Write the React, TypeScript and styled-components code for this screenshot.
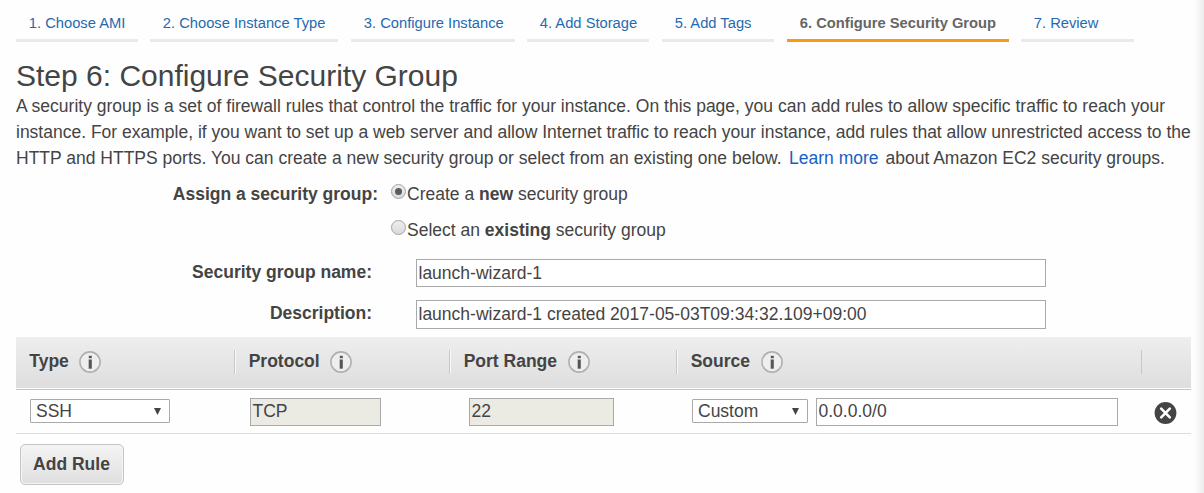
import React from 'react';
import styled, { createGlobalStyle } from 'styled-components';

const GlobalStyle = createGlobalStyle`
  * { box-sizing: border-box; }
  html, body { margin: 0; padding: 0; }
  body {
    background: #fefefe;
    color: #444;
    font-family: "Liberation Sans", Arial, sans-serif;
    font-size: 17.5px;
    overflow: hidden;
  }
`;

const Page = styled.main`
  display: flex;
  justify-content: space-between;
  width: 1204px;
  height: 493px;
  overflow: hidden;
`;

const Content = styled.div`
  display: flex;
  flex-direction: column;
  width: 1175px;
  margin-left: 16px;
`;

const EdgeShadow = styled.div`
  width: 10px;
  background: linear-gradient(to right, #fefefe, #f6f6f6 50%, #ebebeb);
`;

const Tabs = styled.nav`
  display: flex;
  height: 42px;
`;

const Tab = styled.a<{ $width: number; $gap: number; $active?: boolean }>`
  width: ${p => p.$width}px;
  margin-right: ${p => p.$gap}px;
  padding: 14px 0 0 12.8px;
  border-bottom: 3px solid ${p => (p.$active ? '#fa9a14' : '#eaeaea')};
  color: ${p => (p.$active ? '#666' : '#1f6ab2')};
  font-size: 14.72px;
  font-weight: ${p => (p.$active ? 700 : 400)};
  line-height: 18px;
  white-space: nowrap;
`;

const Title = styled.h1`
  margin: 17px 0 0;
  font-size: 30px;
  font-weight: 400;
  line-height: 34px;
  white-space: nowrap;
`;

const Intro = styled.p`
  margin: 0;
  line-height: 26px;
  white-space: nowrap;
`;

const Line = styled.span<{ $spacing?: number }>`
  display: block;
  letter-spacing: ${p => p.$spacing ?? 0}px;
`;

const Link = styled.a`
  margin: 0 2px 0 2.6px;
  color: #1a5fc4;
`;

const ChoiceRow = styled.div`
  display: flex;
  height: 36px;
  line-height: 20px;
  white-space: nowrap;
`;

const ChoiceLabel = styled.strong`
  width: 362px;
  text-align: right;
`;

const Choice = styled.label`
  display: flex;
  margin-left: 13px;
`;

const Radio = styled.span<{ $checked?: boolean }>`
  display: flex;
  align-items: center;
  justify-content: center;
  width: 15px;
  height: 15px;
  margin-right: 1px;
  border: 1px solid #a2a2a2;
  border-radius: 50%;
  background: linear-gradient(#eee, #dadada);
  &::after {
    content: '';
    width: 7px;
    height: 7px;
    border-radius: 50%;
    background: ${p => (p.$checked ? '#5c5c5c' : 'transparent')};
  }
`;

const Choices = styled.div`
  padding-top: 13px;
  height: 88px;
`;

const Field = styled.div<{ $gap: number; $height: number }>`
  display: flex;
  height: ${p => p.$height}px;
  margin-bottom: ${p => p.$gap}px;
`;

const FieldLabel = styled.strong`
  width: 356px;
  margin-right: 44px;
  line-height: 26px;
  text-align: right;
`;

const TextBox = styled.div<{ $width: number; $disabled?: boolean; $line?: number }>`
  width: ${p => p.$width}px;
  height: 100%;
  padding-left: 1.5px;
  border: 1px solid #a9a9a9;
  background: ${p => (p.$disabled ? '#ebebe4' : '#fff')};
  line-height: ${p => p.$line ?? 26}px;
  white-space: nowrap;
`;

const HeaderRow = styled.div`
  display: flex;
  height: 51px;
  padding-top: 13px;
  background: linear-gradient(#eee, #dedede);
`;

const HeaderCell = styled.div<{ $width: number; $divided?: boolean; $last?: boolean }>`
  display: flex;
  width: ${p => p.$width}px;
  height: 24px;
  padding-left: ${p => (p.$divided ? 13.7 : 13.3)}px;
  border-left: ${p => (p.$divided ? '1px solid #c8c8c8' : '0')};
  box-shadow: ${p => (p.$divided && !p.$last ? 'inset 1px 0 #f8f8f8' : 'none')};
  font-weight: 700;
  line-height: 22px;
  white-space: nowrap;
`;

const HeaderLabel = styled.span<{ $width: number }>`
  width: ${p => p.$width}px;
`;

const RuleRow = styled.div`
  display: flex;
  height: 45px;
  margin-top: 1px;
  padding: 8px 0 7px 14px;
  border-top: 1px solid #c4c4c4;
  border-bottom: 1px solid #ddd;
`;

const Cell = styled.div<{ $width: number }>`
  display: flex;
  width: ${p => p.$width}px;
  height: 28px;
`;

const Select = styled.div<{ $width: number }>`
  display: flex;
  justify-content: space-between;
  width: ${p => p.$width}px;
  height: 24px;
  margin: 1px 8px 0 0;
  padding: 0 8px 0 5px;
  border: 1px solid #a9a9a9;
  border-radius: 1px;
  background: #fff;
  line-height: 22px;
  svg { margin-top: 8px; }
`;

const RemoveButton = styled.span`
  display: flex;
  margin-top: 4px;
`;

const AddButton = styled.button`
  width: 104px;
  height: 41px;
  margin: 10px 0 0 4px;
  padding: 0 1px 0 0;
  border: 1px solid #c4c4c4;
  border-radius: 5px;
  background: linear-gradient(#f4f4f4, #dfdfdf);
  box-shadow: inset 0 0 0 1px #f4f4f4;
  color: #444;
  font: 700 17.5px "Liberation Sans", Arial, sans-serif;
`;

const Icon = styled.svg`
  flex: none;
  margin-top: 1px;
`;

const InfoIcon = () => (
  <Icon width="22" height="22" viewBox="0 0 22 22">
    <circle cx="11" cy="11" r="10.1" fill="#eee" stroke="#b0b0b0" strokeWidth="1.6" />
    <path d="M9.8 4.8h3v2.4h-3z" fill="#555" />
    <path d="M9.8 8.5h3v9.2h-3z" fill="#555" />
    <path d="M9 8.5h.8v9.2H9z" fill="#bbb" />
  </Icon>
);

const Arrow = () => (
  <svg width="7" height="7" viewBox="0 0 7 7">
    <path d="M0 0h7L3.5 7z" fill="#444" />
  </svg>
);

const tabs = [
  { label: '1. Choose AMI', width: 122, gap: 12 },
  { label: '2. Choose Instance Type', width: 188, gap: 13 },
  { label: '3. Configure Instance', width: 164, gap: 12 },
  { label: '4. Add Storage', width: 122, gap: 13 },
  { label: '5. Add Tags', width: 112, gap: 13 },
  { label: '6. Configure Security Group', width: 222, gap: 12, active: true },
  { label: '7. Review', width: 113, gap: 0 },
];

const columns = [
  { label: 'Type', width: 218, labelWidth: 49.7 },
  { label: 'Protocol', width: 215, labelWidth: 81.3 },
  { label: 'Port Range', width: 227, labelWidth: 104.3 },
  { label: 'Source', width: 465, labelWidth: 70.3 },
];

export default function App() {
  return (
    <Page>
      <GlobalStyle />
      <Content>
        <Tabs>
          {tabs.map(t => (
            <Tab key={t.label} $width={t.width} $gap={t.gap} $active={t.active}>{t.label}</Tab>
          ))}
        </Tabs>
        <Title>Step 6: Configure Security Group</Title>
        <Intro>
          <Line $spacing={0.006}>A security group is a set of firewall rules that control the traffic for your instance. On this page, you can add rules to allow specific traffic to reach your</Line>
          <Line>instance. For example, if you want to set up a web server and allow Internet traffic to reach your instance, add rules that allow unrestricted access to the</Line>
          <Line $spacing={0.004}>HTTP and HTTPS ports. You can create a new security group or select from an existing one below. <Link>Learn more</Link> about Amazon EC2 security groups.</Line>
        </Intro>
        <Choices>
          <ChoiceRow>
            <ChoiceLabel>Assign a security group:</ChoiceLabel>
            <Choice><Radio $checked /><span>Create a <b>new</b> security group</span></Choice>
          </ChoiceRow>
          <ChoiceRow>
            <ChoiceLabel />
            <Choice><Radio /><span>Select an <b>existing</b> security group</span></Choice>
          </ChoiceRow>
        </Choices>
        <Field $height={28} $gap={13}>
          <FieldLabel>Security group name:</FieldLabel>
          <TextBox $width={630}>launch-wizard-1</TextBox>
        </Field>
        <Field $height={29} $gap={8}>
          <FieldLabel>Description:</FieldLabel>
          <TextBox $width={630}>launch-wizard-1 created 2017-05-03T09:34:32.109+09:00</TextBox>
        </Field>
        <HeaderRow>
          {columns.map((c, i) => (
            <HeaderCell key={c.label} $width={c.width} $divided={i > 0}>
              <HeaderLabel $width={c.labelWidth}>{c.label}</HeaderLabel>
              <InfoIcon />
            </HeaderCell>
          ))}
          <HeaderCell $width={50} $divided $last />
        </HeaderRow>
        <RuleRow>
          <Cell $width={220}><Select $width={140}>SSH<Arrow /></Select></Cell>
          <Cell $width={219}><TextBox $width={131} $disabled $line={24}>TCP</TextBox></Cell>
          <Cell $width={223}><TextBox $width={145} $disabled $line={24}>22</TextBox></Cell>
          <Cell $width={462}>
            <Select $width={116}>Custom<Arrow /></Select>
            <TextBox $width={302} $line={24}>0.0.0.0/0</TextBox>
          </Cell>
          <RemoveButton>
            <svg width="23" height="23" viewBox="0 0 23 23">
              <circle cx="11.5" cy="11" r="10.9" fill="#444" />
              <path d="M7.2 6.7l8.6 8.6M15.8 6.7l-8.6 8.6" stroke="#fff" strokeWidth="2.6" strokeLinecap="round" />
            </svg>
          </RemoveButton>
        </RuleRow>
        <AddButton>Add Rule</AddButton>
      </Content>
      <EdgeShadow />
    </Page>
  );
}
